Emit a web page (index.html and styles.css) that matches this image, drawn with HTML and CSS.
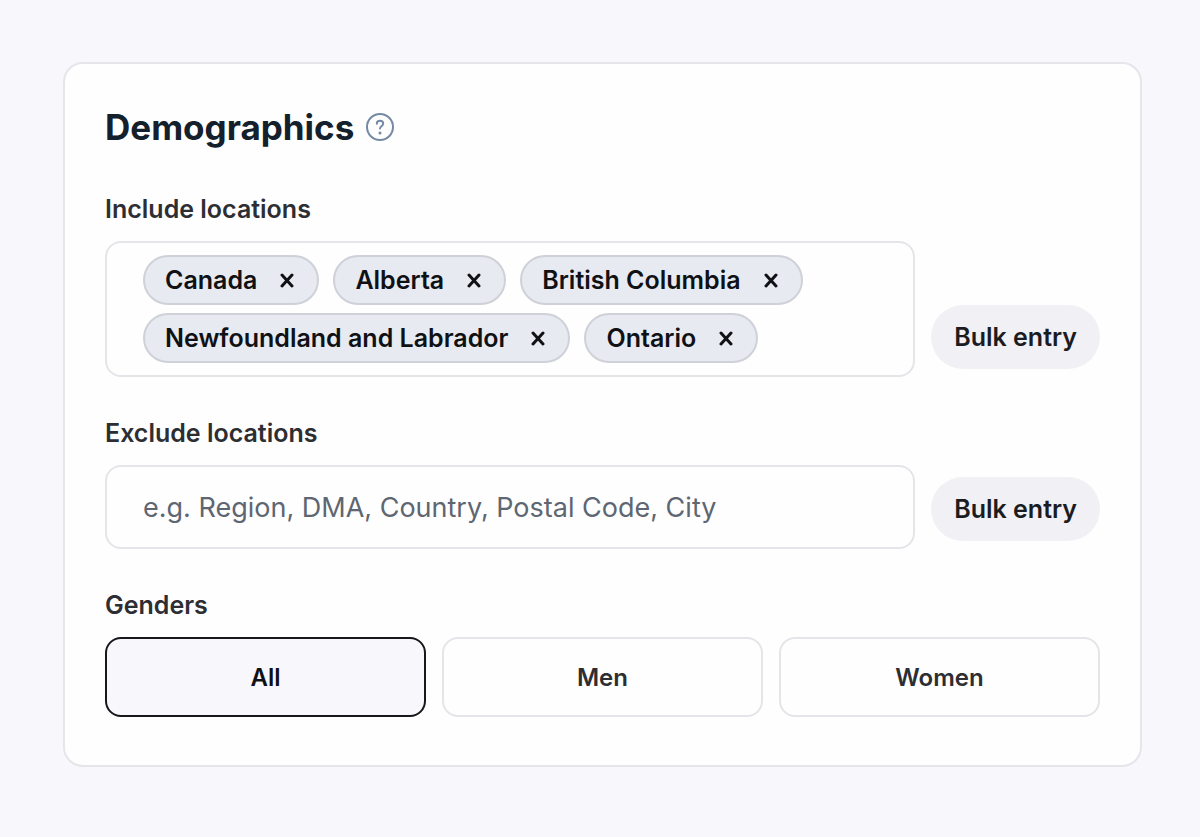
FILE: index.html
```html
<!DOCTYPE html>
<html lang="en">
<head>
  <meta charset="UTF-8" />
  <meta name="viewport" content="width=device-width, initial-scale=1.0"/>
  <title>Demographics</title>
  <link rel="stylesheet" href="styles.css">
</head>
<body>
  <form class="card">
    <div class="card-header">
      <h2>Demographics</h2>
      <button type="button" class="help" aria-label="Help">
        <svg viewBox="0 0 28 28" width="28" height="28" fill="none" stroke="currentColor" stroke-width="2" stroke-linecap="round" stroke-linejoin="round">
          <circle cx="14" cy="14" r="13"/>
          <path d="M10.8 10.8c0-1.9 1.4-3 3.2-3s3.2 1.1 3.2 2.8c0 2.6-3.2 2.6-3.2 5"/>
          <circle cx="14" cy="19.9" r="1.5" fill="currentColor" stroke="none"/>
        </svg>
      </button>
    </div>

    <div class="field" role="group" aria-labelledby="include-label">
      <span class="label" id="include-label">Include locations</span>
      <div class="row">
        <div class="box tags">
          <span class="tag">Canada <button type="button" aria-label="Remove Canada"><svg viewBox="0 0 16 16"><path d="M3 3l10 11M13 3L3 14"/></svg></button></span>
          <span class="tag">Alberta <button type="button" aria-label="Remove Alberta"><svg viewBox="0 0 16 16"><path d="M3 3l10 11M13 3L3 14"/></svg></button></span>
          <span class="tag">British Columbia <button type="button" aria-label="Remove British Columbia"><svg viewBox="0 0 16 16"><path d="M3 3l10 11M13 3L3 14"/></svg></button></span>
          <span class="tag">Newfoundland and Labrador <button type="button" aria-label="Remove Newfoundland and Labrador"><svg viewBox="0 0 16 16"><path d="M3 3l10 11M13 3L3 14"/></svg></button></span>
          <span class="tag">Ontario <button type="button" aria-label="Remove Ontario"><svg viewBox="0 0 16 16"><path d="M3 3l10 11M13 3L3 14"/></svg></button></span>
        </div>
        <button type="button" class="bulk">Bulk entry</button>
      </div>
    </div>

    <div class="field">
      <label class="label" for="exclude">Exclude locations</label>
      <div class="row">
        <input class="box" id="exclude" type="text" placeholder="e.g. Region, DMA, Country, Postal Code, City" />
        <button type="button" class="bulk">Bulk entry</button>
      </div>
    </div>

    <div class="field" role="group" aria-labelledby="genders-label">
      <span class="label" id="genders-label">Genders</span>
      <div class="genders">
        <button type="button" class="gender active" aria-pressed="true">All</button>
        <button type="button" class="gender" aria-pressed="false">Men</button>
        <button type="button" class="gender" aria-pressed="false">Women</button>
      </div>
    </div>
  </form>
</body>
</html>
```
FILE: styles.css
```css
* {
  box-sizing: border-box;
}
body {
  margin: 0;
  padding: 62px 58px 62px 63px;
  font-family: Inter, "Liberation Sans", sans-serif;
  background-color: #f7f7fc;
  color: #2d2e33;
}
button {
  font-family: inherit;
  cursor: pointer;
}
.card {
  padding: 40px 40px 48px;
  background-color: #fefefe;
  border: 2px solid #e6e5ea;
  border-radius: 20px;
}
.card-header {
  display: flex;
  align-items: center;
  gap: 12px;
  height: 46px;
}
h2 {
  margin: 0;
  font-size: 35px;
  font-weight: 700;
  color: #14202b;
}
.help {
  display: flex;
  padding: 0;
  border: none;
  background: none;
  color: #7489a3;
}
.field {
  margin-top: 40px;
}
.card-header + .field {
  margin-top: 43px;
}
.label {
  display: block;
  margin-bottom: 16px;
  font-size: 25px;
  line-height: 32px;
  font-weight: 600;
}
.row {
  display: flex;
  align-items: flex-end;
  gap: 16px;
}
.box {
  flex: 1;
  min-width: 0;
  padding: 12px 36px;
  background-color: #fefefe;
  border: 2px solid #e6e4e9;
  border-radius: 16px;
}
.tags {
  display: flex;
  flex-wrap: wrap;
  gap: 8px 14px;
}
.tag {
  display: flex;
  align-items: center;
  gap: 22px;
  height: 50px;
  padding: 0 22px 0 20px;
  background-color: #e7eaf1;
  border: 2px solid #cfd1d8;
  border-radius: 25px;
  font-size: 25px;
  font-weight: 600;
  color: #101114;
}
.tag button {
  display: flex;
  padding: 0;
  border: none;
  background: none;
  color: inherit;
}
.tag svg {
  width: 16px;
  height: 16px;
  fill: none;
  stroke: currentColor;
  stroke-width: 3;
  stroke-linecap: round;
}
input.box {
  height: 84px;
  font-family: inherit;
  font-size: 27px;
  color: #2d2e33;
}
input.box::placeholder {
  color: #5e6672;
  opacity: 1;
}
.bulk {
  height: 64px;
  margin-bottom: 8px;
  padding: 0 23px;
  background-color: #f1f0f5;
  border: none;
  border-radius: 32px;
  font-size: 25px;
  font-weight: 600;
  color: #1b1c21;
}
.genders {
  display: grid;
  grid-template-columns: repeat(3, 1fr);
  gap: 16px;
}
.gender {
  height: 80px;
  background-color: #fefefe;
  border: 2px solid #e6e4e9;
  border-radius: 16px;
  font-size: 24px;
  font-weight: 600;
  color: #2d2e33;
}
.gender.active {
  background-color: #f7f7fc;
  border-color: #17181c;
  color: #101114;
}
```
